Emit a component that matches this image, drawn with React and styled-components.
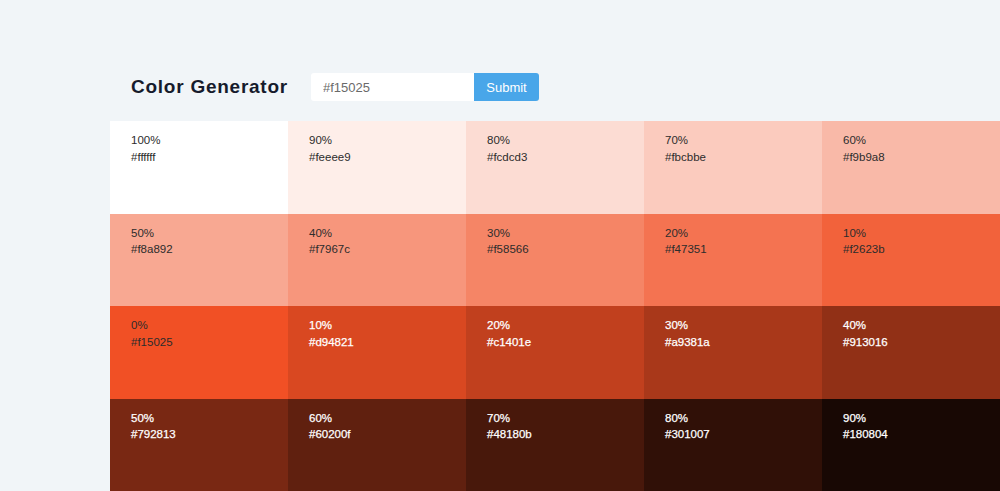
import React from "react";
import styled, { createGlobalStyle } from "styled-components";

const Global = createGlobalStyle`
  html, body { margin: 0; padding: 0; }
  body {
    background: #f1f5f8;
    font-family: "Liberation Sans", Arial, sans-serif;
    overflow: hidden;
  }
`;

const Page = styled.main`
  width: 1000px;
  height: 491px;
  overflow: hidden;
`;

const Header = styled.header`
  display: grid;
  grid-template-columns: 180px auto;
  align-items: center;
  margin: 73px 0 20px 131px;
  height: 28px;
`;

const Title = styled.h3`
  margin: 0;
  font-size: 19px;
  font-weight: 700;
  letter-spacing: 0.75px;
  color: #161b2c;
`;

const Form = styled.form`
  display: flex;
  height: 28px;
`;

const Input = styled.input`
  box-sizing: border-box;
  width: 163px;
  height: 28px;
  border: none;
  border-radius: 3px 0 0 3px;
  background: #fff;
  padding: 0 12px;
  font-family: "Liberation Sans", Arial, sans-serif;
  font-size: 13px;
  color: #6a6a6a;
  outline: none;
`;

const Button = styled.button`
  box-sizing: border-box;
  width: 65px;
  height: 28px;
  border: none;
  border-radius: 0 3px 3px 0;
  background: #49a6e9;
  color: #fff;
  font-family: "Liberation Sans", Arial, sans-serif;
  font-size: 13px;
  padding: 0;
`;

const Grid = styled.section`
  display: grid;
  grid-template-columns: repeat(5, 178px);
  grid-auto-rows: 92.5px;
  margin-left: 110px;
`;

const Cell = styled.article`
  box-sizing: border-box;
  padding: 11px 21px;
  background: ${(p) => p.$bg};
  color: ${(p) => (p.$light ? "#ffffff" : "#2c2c2c")};
  font-size: 11.5px;
  line-height: 16.5px;
  -webkit-text-stroke: ${(p) => (p.$light ? "0.25px #ffffff" : "0")};
`;

const Line = styled.p`
  margin: 0;
`;

const colors = [
  ["100%", "#ffffff"],
  ["90%", "#feeee9"],
  ["80%", "#fcdcd3"],
  ["70%", "#fbcbbe"],
  ["60%", "#f9b9a8"],
  ["50%", "#f8a892"],
  ["40%", "#f7967c"],
  ["30%", "#f58566"],
  ["20%", "#f47351"],
  ["10%", "#f2623b"],
  ["0%", "#f15025"],
  ["10%", "#d94821"],
  ["20%", "#c1401e"],
  ["30%", "#a9381a"],
  ["40%", "#913016"],
  ["50%", "#792813"],
  ["60%", "#60200f"],
  ["70%", "#48180b"],
  ["80%", "#301007"],
  ["90%", "#180804"],
];

export default function App() {
  return (
    <Page>
      <Global />
      <Header>
        <Title>Color Generator</Title>
        <Form onSubmit={(e) => e.preventDefault()}>
          <Input type="text" defaultValue="#f15025" />
          <Button type="submit">Submit</Button>
        </Form>
      </Header>
      <Grid>
        {colors.map(([w, hex], i) => (
          <Cell key={i} $bg={hex} $light={i > 10}>
            <Line>{w}</Line>
            <Line>{hex}</Line>
          </Cell>
        ))}
      </Grid>
    </Page>
  );
}
